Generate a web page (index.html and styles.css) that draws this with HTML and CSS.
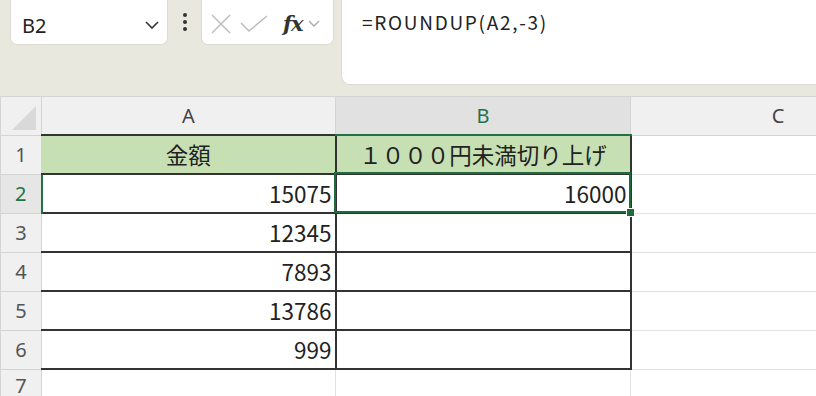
FILE: index.html
```html
<!DOCTYPE html>
<html lang="ja">
<head>
  <meta charset="UTF-8" />
  <title>ROUNDUP</title>
  <link rel="stylesheet" href="styles.css">
</head>
<body>
  <div class="toolbar">
    <div class="namebox">
      <span class="ref">B2</span>
      <svg class="chev" width="14" height="8" viewBox="0 0 14 8"><path d="M1 1 L7 7 L13 1" fill="none" stroke="#333" stroke-width="1.6"/></svg>
    </div>
    <div class="dots"><i></i><i></i><i></i></div>
    <div class="fxbox">
      <svg width="20" height="20" viewBox="0 0 20 20"><path d="M1 1 L19 19 M19 1 L1 19" stroke="#bdbdbd" stroke-width="1.5"/></svg>
      <svg width="28" height="18" viewBox="0 0 28 18"><path d="M1 8 L9 16 L27 1" fill="none" stroke="#bdbdbd" stroke-width="1.5"/></svg>
      <span class="fx">fx</span>
      <svg width="12" height="8" viewBox="0 0 12 8"><path d="M1 1 L6 6 L11 1" fill="none" stroke="#aaa" stroke-width="1.4"/></svg>
    </div>
    <div class="formula">=ROUNDUP(A2,-3)</div>
  </div>

  <div class="sheet">
    <table class="grid">
      <colgroup>
        <col class="c-head"><col class="c-a"><col class="c-b"><col class="c-c">
      </colgroup>
      <tr class="colhead">
        <th class="corner"><span class="tri"></span></th>
        <th>A</th>
        <th class="sel">B</th>
        <th>C</th>
      </tr>
      <tr>
        <th class="rowhead">1</th>
        <td class="title box first">金額</td>
        <td class="title box">１０００円未満切り上げ</td>
        <td></td>
      </tr>
      <tr>
        <th class="rowhead sel">2</th>
        <td class="num box first">15075</td>
        <td class="num box">16000</td>
        <td></td>
      </tr>
      <tr>
        <th class="rowhead">3</th>
        <td class="num box first">12345</td>
        <td class="box"></td>
        <td></td>
      </tr>
      <tr>
        <th class="rowhead">4</th>
        <td class="num box first">7893</td>
        <td class="box"></td>
        <td></td>
      </tr>
      <tr>
        <th class="rowhead">5</th>
        <td class="num box first">13786</td>
        <td class="box"></td>
        <td></td>
      </tr>
      <tr>
        <th class="rowhead">6</th>
        <td class="num box first">999</td>
        <td class="box"></td>
        <td></td>
      </tr>
      <tr class="last">
        <th class="rowhead">7</th>
        <td></td>
        <td></td>
        <td></td>
      </tr>
    </table>
    <div class="selection"><span class="handle"></span></div>
  </div>
</body>
</html>
```

FILE: styles.css
```css
body {
  margin: 0;
  background: #ffffff;
  font-family: "Noto Sans CJK JP", "Noto Sans", sans-serif;
  color: #222;
  overflow: hidden;
}

/* formula bar */
.toolbar {
  height: 96px;
  background: #e9e8df;
  display: flex;
  align-items: flex-start;
  padding-left: 11px;
}

.namebox {
  width: 156px;
  height: 44px;
  background: #fff;
  border-radius: 0 0 6px 6px;
  box-shadow: 0 0 0 1px #dcdbd2;
  display: flex;
  align-items: center;
  justify-content: space-between;
  padding: 0 8px 0 11px;
  box-sizing: border-box;
}

.ref {
  font-family: "Noto Sans", sans-serif;
  font-size: 20px;
  color: #222;
  padding-top: 7px;
}

.chev {
  margin-top: 5px;
}

.dots {
  width: 35px;
  height: 44px;
  display: flex;
  flex-direction: column;
  align-items: center;
  justify-content: center;
  gap: 3px;
}

.dots i {
  width: 4px;
  height: 4px;
  border-radius: 50%;
  background: #333;
}

.fxbox {
  width: 131px;
  height: 44px;
  background: #fff;
  border-radius: 0 0 6px 6px;
  box-shadow: 0 0 0 1px #dcdbd2;
  display: flex;
  align-items: center;
  padding-left: 9px;
  padding-top: 3px;
  gap: 9px;
  box-sizing: border-box;
}

.fx {
  font-family: "DejaVu Serif", serif;
  font-style: italic;
  font-weight: bold;
  font-size: 21px;
  color: #333;
  margin-left: 6px;
  margin-right: -4px;
  letter-spacing: -1px;
}

.formula {
  flex: 1;
  margin-left: 9px;
  height: 84px;
  background: #fff;
  border-radius: 0 0 0 8px;
  box-shadow: 0 0 0 1px #dcdbd2;
  padding: 8px 0 0 20px;
  box-sizing: border-box;
  font-size: 19px;
  letter-spacing: 1.7px;
}

/* sheet */
.sheet {
  position: relative;
}

.grid {
  border-collapse: collapse;
  table-layout: fixed;
  width: 925px;
}

.c-head { width: 41px; }
.c-a { width: 294px; }
.c-b { width: 295px; }
.c-c { width: 295px; }

.grid th,
.grid td {
  border: 1px solid #e1e1e1;
  padding: 0 3px;
  height: 37px;
  font-weight: normal;
  font-size: 22.5px;
  line-height: 1;
  white-space: nowrap;
  overflow: hidden;
}

.grid .colhead th {
  background: #f0f0f0;
  color: #444;
  border-color: #d4d4d4;
  height: 37px;
  text-align: center;
  font-family: "Noto Sans", sans-serif;
  font-size: 20px;
}

.grid .colhead th.sel {
  background: #e1e1e1;
  color: #217346;
  border-bottom: 2px solid #217346;
}

.corner {
  position: relative;
}

.tri {
  position: absolute;
  right: 5px;
  bottom: 5px;
  width: 0;
  height: 0;
  border-left: 24px solid transparent;
  border-bottom: 24px solid #d9d9d9;
}

.grid .rowhead {
  background: #f0f0f0;
  color: #555;
  border-color: #d4d4d4;
  font-family: "Noto Sans", sans-serif;
  font-size: 20px;
  text-align: center;
}

.grid .last th,
.grid .last td {
  vertical-align: top;
  padding-top: 6px;
}

.grid .rowhead.sel {
  background: #e6e6e6;
  color: #217346;
  border-right: 2px solid #217346;
}

.grid .box {
  border: 2px solid #333;
}

.grid .box.first {
  border-left: 1px solid #d4d4d4;
}

.title {
  background: #c6e0b4;
  text-align: center;
}

.num {
  text-align: right;
}

.selection {
  position: absolute;
  left: 334px;
  top: 76px;
  width: 293px;
  height: 37px;
  border: 2px solid #1e6b3c;
}

.handle {
  position: absolute;
  right: -6px;
  bottom: -6px;
  width: 7px;
  height: 7px;
  background: #1e6b3c;
  border: 1px solid #fff;
}
```
